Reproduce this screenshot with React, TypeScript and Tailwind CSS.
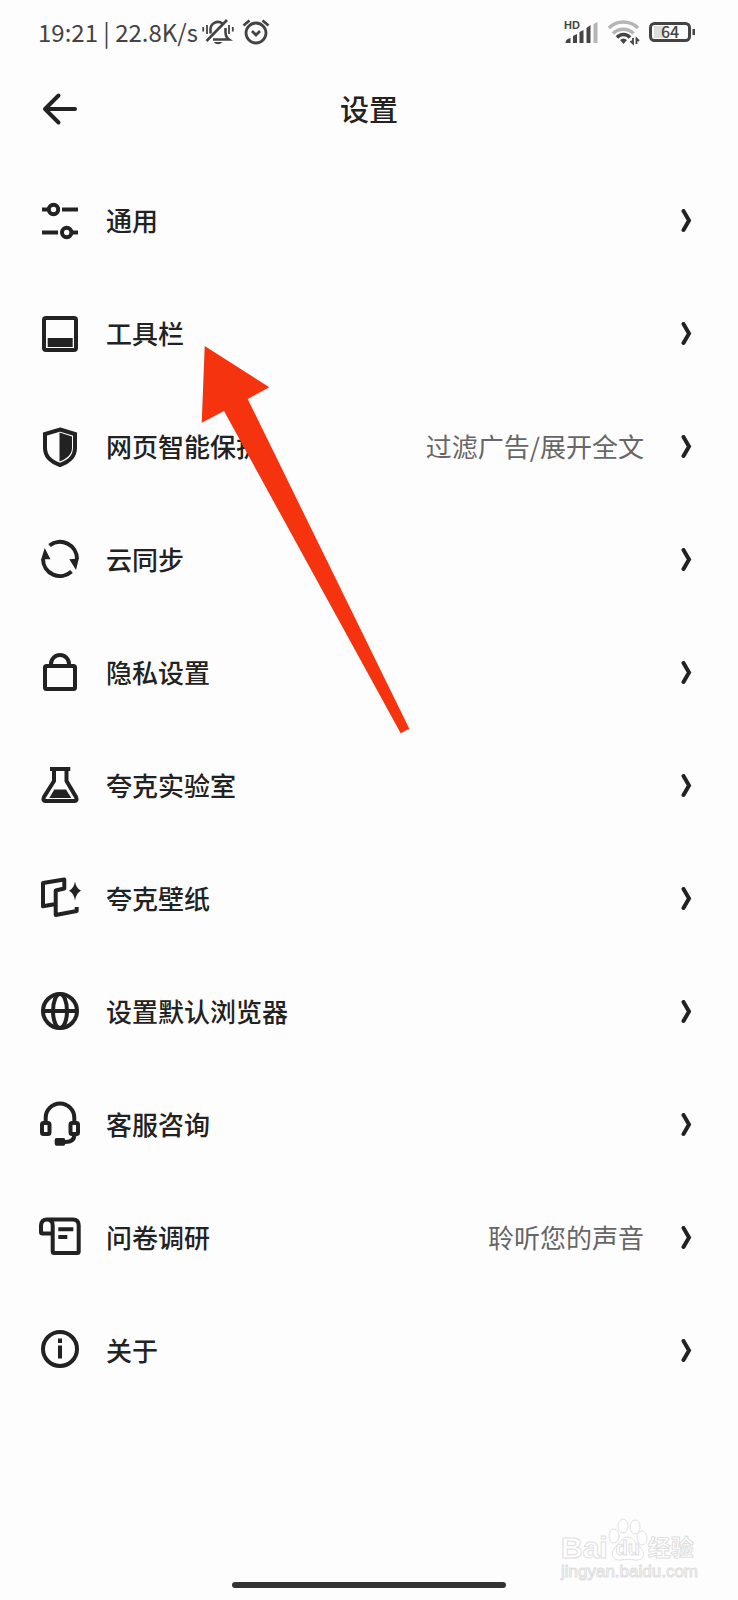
import type { ReactNode } from 'react'

type Item = { title: string; note?: string; icon: ReactNode }

const items: Item[] = [
	{
		title: '通用',
		icon: (
			<>
				<path d="M4 10.5h6M24 10.5h16M4 33.5h16M34 33.5h6" />
				<circle cx="15.5" cy="10.5" r="4.7" />
				<circle cx="28.7" cy="33.5" r="4.7" />
			</>
		),
	},
	{
		title: '工具栏',
		icon: (
			<>
				<rect x="6" y="6" width="32" height="32" rx="2" />
				<path d="M9.7 26h25v9h-25z" fill="currentColor" stroke="none" />
			</>
		),
	},
	{
		title: '网页智能保护',
		note: '过滤广告/展开全文',
		icon: (
			<>
				<path d="M22 4.5 37 9V23C37 32.5 29 37.5 22 40 15 37.5 7 32.5 7 23V9Z" />
				<path d="M21.5 7.5 34 11.5V23C34 29.5 28.5 34 21.5 36.5Z" fill="currentColor" stroke="none" />
			</>
		),
	},
	{
		title: '云同步',
		icon: (
			<>
				<path d="M11.5 7.5A17 17 0 0 1 39 21M5 21A17 17 0 0 0 33.5 33.5" />
				<path d="M31.3 21.3 40.8 20.5 38 32ZM3.2 21.3H12.5L6.7 10Z" fill="currentColor" stroke="none" />
			</>
		),
	},
	{
		title: '隐私设置',
		icon: (
			<>
				<rect x="7" y="15" width="30" height="23" rx="1.5" />
				<path d="M13 15v-2a9 9 0 0 1 18 0v2" />
			</>
		),
	},
	{
		title: '夸克实验室',
		icon: (
			<>
				<path d="M12 5h20.3M16 5v12L6 33q-1.6 4 1.5 4h29q3.1 0 1.5-4L28.5 17V5" />
				<path d="M16.3 25.5H28l5.3 8.5h-22z" fill="currentColor" stroke="none" />
			</>
		),
	},
	{
		title: '夸克壁纸',
		icon: (
			<>
				<path d="M17.7 27 5 29.3V6L26.3 2.5v9L17.7 13.5V38l21-4V30" strokeLinejoin="round" />
				<path d="M37 4.5q1.2 7 6 9.3-4.8 2.2-6 9.7-1.2-7.5-6-9.7 4.8-2.3 6-9.3z" fill="currentColor" stroke="none" />
			</>
		),
	},
	{
		title: '设置默认浏览器',
		icon: (
			<>
				<circle cx="22" cy="21" r="17" />
				<ellipse cx="22" cy="21" rx="7" ry="17" />
				<path d="M5 21h34" />
			</>
		),
	},
	{
		title: '客服咨询',
		icon: (
			<>
				<path d="M7.7 19v-4.2a14.3 14.3 0 0 1 28.6 0V19M36.3 32q0 7-9.3 7" />
				<rect x="4" y="20" width="7.5" height="11" rx="1.5" />
				<rect x="32.5" y="20" width="7.5" height="11" rx="1.5" />
				<rect x="16.7" y="35" width="10.6" height="7.8" rx="2" fill="currentColor" stroke="none" />
			</>
		),
	},
	{
		title: '问卷调研',
		note: '聆听您的声音',
		icon: (
			<>
				<path d="M9 3.5h25.7q6 0 6 6v26q0 1.5-1.5 1.5h-23q-1.5 0-1.5-1.5V9.500q0-6-5.7-6T3 9.5V16q0 1.5 1.5 1.5h10" />
				<path d="M20.3 13.3h15M20.3 21h9" />
			</>
		),
	},
	{
		title: '关于',
		icon: (
			<>
				<circle cx="22" cy="20" r="17" />
				<path d="M22 9.5v4.5M22 16.5v13" />
			</>
		),
	},
]

const StatusBar = () => (
	<div className="flex h-16 items-center justify-between pr-[42px] pl-[38px] text-[#444]">
		<div className="flex items-center">
			<span className="mr-1 text-[24px]">19:21 | 22.8K/s</span>
			<svg className="mr-2 h-7 w-8" viewBox="0 0 32 28" fill="none" stroke="currentColor" strokeWidth="2.6">
				<path d="M8.5 15.5V12a7.5 7.5 0 0 1 12-6.5M23.5 10v4q0 5 3.5 7.5H11" />
				<path d="M4.5 23 25 2" />
				<path d="M1.2 9v4.5M5 7v9M27 7v9M30.8 9v4.5" strokeWidth="1.8" />
				<path d="M11.5 24h9q-4.5 4.5-9 0z" fill="currentColor" stroke="none" />
			</svg>
			<svg className="h-7 w-7" viewBox="0 0 28 28" fill="none" stroke="currentColor" strokeWidth="2.8">
				<circle cx="14" cy="15" r="10" />
				<path d="M1.5 7.5 7.5 2.5M20.5 2.5l6 5M10 13l4 4 4-4" />
			</svg>
		</div>
		<div className="flex items-center gap-2">
			<svg className="h-7 w-9" viewBox="0 0 36 28">
				<text x="0" y="11" className="fill-[#444] font-['Liberation_Sans',sans-serif] text-[11px] font-bold">
					HD
				</text>
				<path d="M1.5 25q0-4 5-5v5zM9 18l4-2v9H9zM15.5 14l4-2v13h-4zM22.5 10l4-3v18h-4z" fill="#444" />
				<path d="M29.5 6l4-2v21h-4z" fill="#b5b5b5" />
			</svg>
			<svg className="h-7 w-8" viewBox="0 0 32 28" fill="none" strokeWidth="3.5">
				<path d="M1 10a20.5 20.5 0 0 1 29 0M5 15.5a14.5 14.5 0 0 1 20.5 0" stroke="#b5b5b5" />
				<path d="M9 19.5a8.5 8.5 0 0 1 13 0" stroke="#444" />
				<path d="M12 22q3.5-3 7 0L15.5 26z" fill="#444" />
				<path d="M25 20v5.5l-2.5-2.5M28.5 26v-5.5l2.5 2.5" stroke="#444" strokeWidth="1.8" />
			</svg>
			<svg className="h-7 w-12" viewBox="0 0 48 28">
				<rect x="6" y="8" width="11" height="12" fill="#ddd" />
				<rect x="2.5" y="5.5" width="39" height="17" rx="4" fill="none" stroke="#444" strokeWidth="3" />
				<rect x="44.5" y="11" width="2.5" height="6" fill="#444" />
				<text x="22" y="20" textAnchor="middle" className="fill-[#444] text-[16px] font-medium">
					64
				</text>
			</svg>
		</div>
	</div>
)

const Row = ({ title, note, icon }: Item) => (
	<li>
		<a href="#" className="flex h-[113px] items-center pr-[46px] pl-9 text-[26px]">
			<svg className="mr-[22px] h-12 w-12" viewBox="-2 -2 48 48" fill="none" stroke="currentColor" strokeWidth="4">
				{icon}
			</svg>
			<span className="flex-1 pb-[2px] font-medium">{title}</span>
			{note && <span className="mr-9 pb-[2px] text-[#666]">{note}</span>}
			<svg className="h-6 w-3" viewBox="0 0 12 24" fill="none" stroke="currentColor" strokeWidth="4" strokeLinecap="round">
				<path d="M3.5 2 9 11.5 3.5 21" />
			</svg>
		</a>
	</li>
)

const Watermark = () => (
	<div className="mr-10 flex flex-col font-['Liberation_Sans','Noto_Sans_CJK_SC',sans-serif] text-white [-webkit-text-stroke:1px_#e0e0e0]">
		<div className="flex items-end font-bold">
			<span className="text-[30px] leading-7">Bai</span>
			<span className="relative flex h-11 w-10 items-end justify-center">
				<svg className="absolute inset-0 h-11 w-10" viewBox="0 0 40 44" fill="#fff" stroke="#e0e0e0">
					<ellipse cx="6" cy="18" rx="5" ry="7" />
					<ellipse cx="15" cy="8" rx="5" ry="7" />
					<ellipse cx="27" cy="9" rx="5" ry="7" />
					<ellipse cx="34" cy="20" rx="5" ry="7" />
					<path d="M20 19c5 0 6 4 10 8 9 8 6 16-3 15-5-1-9-1-14 0-9 1-12-7-4-15 4-4 6-8 11-8z" />
				</svg>
				<span className="relative text-[20px] leading-7">du</span>
			</span>
			<span className="text-[23px] leading-7">经验</span>
		</div>
		<span className="text-[17px] leading-5">jingyan.baidu.com</span>
	</div>
)

const App = () => {
	return (
		<div className="relative flex min-h-screen flex-col overflow-hidden bg-[#fdfdfd] font-['Noto_Sans_CJK_SC',sans-serif] text-[#222]">
			<StatusBar />
			<header className="grid h-[90px] grid-cols-[1fr_auto_1fr] items-center px-[42px]">
				<button aria-label="返回" className="w-9">
					<svg className="h-9 w-9" viewBox="0 0 36 36" fill="none" stroke="currentColor" strokeWidth="4" strokeLinecap="round" strokeLinejoin="round">
						<path d="M33 18H3M16.5 4.5 3 18l13.5 13.5" />
					</svg>
				</button>
				<h1 className="text-[29px] font-medium">设置</h1>
			</header>
			<ul className="flex-1 pt-[10px]">
				{items.map(item => (
					<Row key={item.title} {...item} />
				))}
			</ul>
			<footer className="flex flex-col items-end pb-3">
				<Watermark />
				<div className="h-[6px] w-[37%] self-center rounded-full bg-[#333]" />
			</footer>

			<svg className="pointer-events-none absolute top-[344px] left-[200px] h-[392px] w-[212px]" viewBox="0 0 212 392" fill="#f6330f">
				<path d="M4.7 2 69.3 43.3 47.7 55 209.3 384.7 200.7 389.3 24 67 1.7 78.7Z" />
			</svg>
		</div>
	)
}

export default App
